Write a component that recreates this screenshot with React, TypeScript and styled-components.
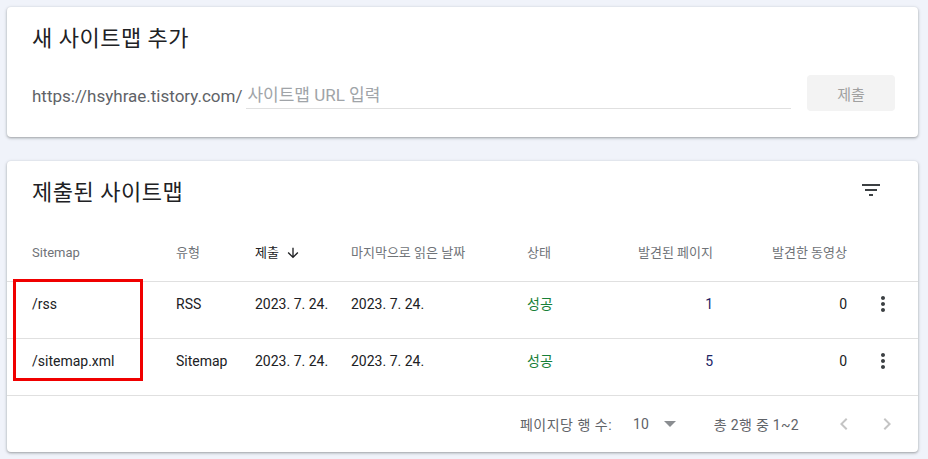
import React from "react";
import styled, { createGlobalStyle } from "styled-components";

const GlobalStyle = createGlobalStyle`
  html, body {
    margin: 0;
    padding: 0;
    background: #f0f3fa;
    font-family: Roboto, "Noto Sans CJK KR", sans-serif;
  }
  * { box-sizing: border-box; }
`;

const Page = styled.div`
  display: flex;
  flex-direction: column;
  gap: 24px;
  padding: 7px 10px 7px 7px;
`;

const Card = styled.section`
  position: relative;
  background: #ffffff;
  border-radius: 4px;
  box-shadow: 0 1px 2px rgba(60, 64, 67, 0.3), 0 1px 3px 1px rgba(60, 64, 67, 0.15);
`;

const AddCard = styled(Card)`
  padding: 20px 23px 26px 25px;
`;

const Title = styled.h2`
  margin: 0;
  font-size: 22px;
  line-height: 24px;
  letter-spacing: 0.5px;
  font-weight: 400;
  color: #202124;
`;

const InputRow = styled.div`
  display: flex;
  align-items: flex-start;
  height: 36px;
  margin-top: 24px;
`;

const Prefix = styled.span`
  align-self: flex-end;
  margin-bottom: 3px;
  font-size: 17px;
  line-height: 24px;
  color: #5f6368;
  white-space: nowrap;
`;

const UrlInput = styled.input`
  flex: 1;
  min-width: 0;
  height: 34px;
  margin-left: 4px;
  padding: 7px 0 0 1px;
  border: none;
  border-bottom: 1px solid #e0e0e0;
  outline: none;
  background: transparent;
  font-family: Roboto, "Noto Sans CJK KR", sans-serif;
  font-size: 17px;
  color: #202124;
  &::placeholder { color: #a0a4a8; }
`;

const SubmitButton = styled.button`
  width: 88px;
  height: 36px;
  margin-left: 16px;
  border: none;
  border-radius: 4px;
  background: #f3f3f3;
  color: #a0a0a0;
  font-family: Roboto, "Noto Sans CJK KR", sans-serif;
  font-size: 15px;
`;

const ListHead = styled.div`
  display: flex;
  justify-content: space-between;
  align-items: flex-start;
  height: 53px;
  padding: 0 23px 0 25px;
`;

const ListTitle = styled(Title)`
  padding-top: 20px;
`;

const IconButton = styled.button<{ $size: number; $top?: number }>`
  display: flex;
  align-items: center;
  justify-content: center;
  width: ${(p) => p.$size}px;
  height: ${(p) => p.$size}px;
  margin-top: ${(p) => p.$top ?? 0}px;
  padding: 0;
  border: none;
  background: transparent;
`;

const Grid = styled.div<{ $head?: boolean }>`
  display: grid;
  grid-template-columns: 144px 79px 96px 176px 100px 86px 134px 1fr;
  align-items: ${(p) => (p.$head ? "center" : "start")};
  height: 57px;
  padding-left: 25px;
  border-bottom: 1px solid #e0e0e0;
  margin-top: ${(p) => (p.$head ? "11px" : "0")};
`;

const HeadCell = styled.div<{ $right?: boolean; $active?: boolean }>`
  display: flex;
  align-items: center;
  justify-content: ${(p) => (p.$right ? "flex-end" : "flex-start")};
  font-size: 13px;
  line-height: 20px;
  color: ${(p) => (p.$active ? "#202124" : "#6f7378")};
  white-space: nowrap;
`;

const SortIcon = styled.svg`
  width: 16px;
  height: 16px;
  margin-left: 6px;
`;

const Cell = styled.div<{ $right?: boolean; $tone?: "ok" | "num" }>`
  padding-top: 12px;
  font-size: 14px;
  line-height: 20px;
  text-align: ${(p) => (p.$right ? "right" : "left")};
  color: ${(p) => (p.$tone === "ok" ? "#188038" : p.$tone === "num" ? "#1c2466" : "#202124")};
  white-space: nowrap;
`;

const MenuCell = styled.div`
  padding: 10px 0 0 24px;
`;

const Footer = styled.div`
  display: flex;
  align-items: center;
  justify-content: flex-end;
  height: 56px;
  padding-right: 19px;
  color: #5f6368;
`;

const FooterLabel = styled.span`
  font-size: 14px;
  letter-spacing: 0.5px;
`;

const PageSize = styled.span`
  margin-left: 21px;
  font-size: 14px;
`;

const Caret = styled.svg`
  margin-left: 15px;
  width: 12px;
  height: 6px;
`;

const Range = styled.span`
  margin: 0 33px 0 38px;
  font-size: 14px;
  letter-spacing: 0.3px;
`;

const PagerGap = styled.span`
  width: 19px;
`;

const Highlight = styled.div`
  position: absolute;
  left: 6px;
  top: 118px;
  width: 130px;
  height: 102px;
  border: 3px solid #f00000;
  pointer-events: none;
`;

const rows = [
  { path: "/rss", type: "RSS", submitted: "2023. 7. 24.", read: "2023. 7. 24.", status: "성공", pages: "1", videos: "0" },
  { path: "/sitemap.xml", type: "Sitemap", submitted: "2023. 7. 24.", read: "2023. 7. 24.", status: "성공", pages: "5", videos: "0" },
];

const MoreVert = () => (
  <svg width="24" height="24" viewBox="0 0 24 24">
    <path
      fill="#3c4043"
      d="M12 8c1.1 0 2-.9 2-2s-.9-2-2-2-2 .9-2 2 .9 2 2 2zm0 2c-1.1 0-2 .9-2 2s.9 2 2 2 2-.9 2-2-.9-2-2-2zm0 6c-1.1 0-2 .9-2 2s.9 2 2 2 2-.9 2-2-.9-2-2-2z"
    />
  </svg>
);

const Chevron = ({ dir }: { dir: "left" | "right" }) => (
  <svg width="24" height="24" viewBox="0 0 24 24">
    <path
      fill="#c4c4c4"
      d={dir === "left" ? "M15.41 7.41L14 6l-6 6 6 6 1.41-1.41L10.83 12z" : "M8.59 16.59L10 18l6-6-6-6-1.41 1.41L13.17 12z"}
    />
  </svg>
);

export default function App() {
  return (
    <>
      <GlobalStyle />
      <Page>
        <AddCard>
          <Title>새 사이트맵 추가</Title>
          <InputRow>
            <Prefix>https://hsyhrae.tistory.com/</Prefix>
            <UrlInput placeholder="사이트맵 URL 입력" />
            <SubmitButton disabled>제출</SubmitButton>
          </InputRow>
        </AddCard>

        <Card>
          <ListHead>
            <ListTitle>제출된 사이트맵</ListTitle>
            <IconButton $size={48} $top={5} aria-label="필터">
              <svg width="24" height="24" viewBox="0 0 24 24">
                <path fill="#3c4043" d="M10 18h4v-2h-4v2zM3 6v2h18V6H3zm3 7h12v-2H6v2z" />
              </svg>
            </IconButton>
          </ListHead>

          <Grid $head>
            <HeadCell>Sitemap</HeadCell>
            <HeadCell>유형</HeadCell>
            <HeadCell $active>
              제출
              <SortIcon viewBox="0 0 24 24">
                <path fill="#202124" d="M20 12l-1.41-1.41L13 16.17V4h-2v12.17l-5.58-5.59L4 12l8 8 8-8z" />
              </SortIcon>
            </HeadCell>
            <HeadCell>마지막으로 읽은 날짜</HeadCell>
            <HeadCell>상태</HeadCell>
            <HeadCell $right>발견된 페이지</HeadCell>
            <HeadCell $right>발견한 동영상</HeadCell>
            <HeadCell />
          </Grid>

          {rows.map((r) => (
            <Grid key={r.path}>
              <Cell>{r.path}</Cell>
              <Cell>{r.type}</Cell>
              <Cell>{r.submitted}</Cell>
              <Cell>{r.read}</Cell>
              <Cell $tone="ok">{r.status}</Cell>
              <Cell $right $tone="num">{r.pages}</Cell>
              <Cell $right>{r.videos}</Cell>
              <MenuCell>
                <MoreVert />
              </MenuCell>
            </Grid>
          ))}

          <Footer>
            <FooterLabel>페이지당 행 수:</FooterLabel>
            <PageSize>10</PageSize>
            <Caret viewBox="0 0 12 6">
              <path fill="#8a8d91" d="M0 0h12L6 6z" />
            </Caret>
            <Range>총 2행 중 1~2</Range>
            <IconButton $size={24} aria-label="이전">
              <Chevron dir="left" />
            </IconButton>
            <PagerGap />
            <IconButton $size={24} aria-label="다음">
              <Chevron dir="right" />
            </IconButton>
          </Footer>

          <Highlight />
        </Card>
      </Page>
    </>
  );
}
